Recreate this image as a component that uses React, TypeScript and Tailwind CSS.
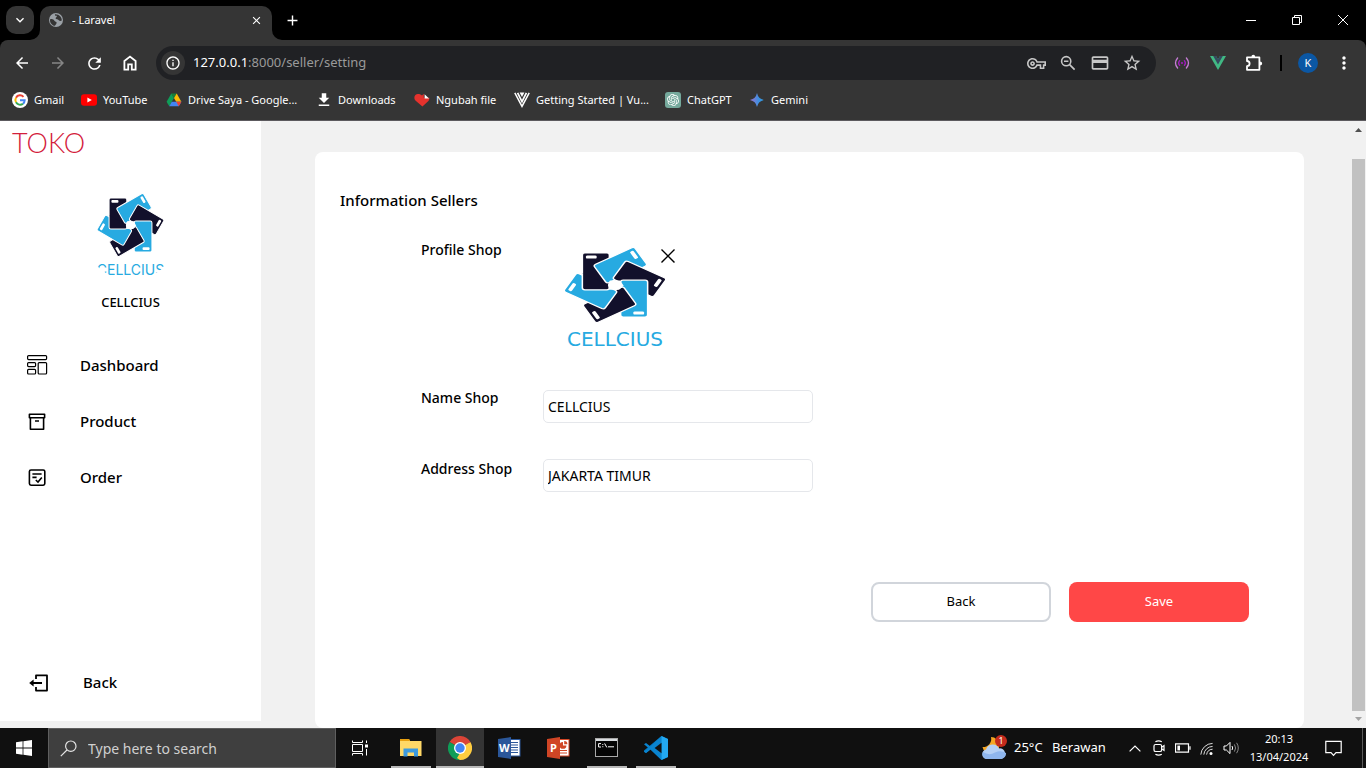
import React, { useState } from "react";
import {
  MdArrowBack,
  MdArrowForward,
  MdRefresh,
  MdInfoOutline,
  MdOutlineVpnKey,
  MdStarBorder,
  MdMoreVert,
  MdKeyboardArrowDown,
  MdClose,
  MdAdd,
  MdOutlineCreditCard,
  MdDownload,
} from "react-icons/md";
import { SiOpenai } from "react-icons/si";

/* ---------- Shop logo ---------- */

const NAVY = "#12102b";
const SKY = "#27aae1";

function Blade({ angle, fill }: { angle: number; fill: string }) {
  return (
    <g transform={`rotate(${angle})`}>
      <rect x="-64" y="-80" width="53" height="92" rx="5" fill={fill} stroke="#fff" strokeWidth="3" />
      <rect x="-57" y="-74" width="21" height="8" rx="3" fill="#fff" />
    </g>
  );
}

function Pinwheel({ id, className }: { id: string; className: string }) {
  return (
    <svg viewBox="-100 -95 200 190" preserveAspectRatio="none" className={className} aria-hidden="true">
      <defs>
        <clipPath id={id}>
          <path d="M-100 -50 L8 12 L8 95 L-100 95Z" />
        </clipPath>
      </defs>
      {[0, 60, 120, 180, 240, 300].map((angle, i) => (
        <Blade key={angle} angle={angle} fill={i % 2 ? SKY : NAVY} />
      ))}
      <g clipPath={`url(#${id})`}>
        <Blade angle={0} fill={NAVY} />
      </g>
      <path d="M-10 -11 L10 -11 L17 2 L8 12 L-11 12 L-14 0Z" fill="#fff" />
    </svg>
  );
}

/* ---------- Browser chrome ---------- */

function IconButton({ label, className = "", children }: { label: string; className?: string; children: React.ReactNode }) {
  return (
    <button aria-label={label} className={`flex h-7 w-7 shrink-0 items-center justify-center text-white ${className}`}>
      {children}
    </button>
  );
}

function TabStrip() {
  return (
    <div className="flex h-10 items-start bg-black">
      <button aria-label="Search tabs" className="mt-[6px] ml-[6px] flex h-7 w-7 items-center justify-center rounded-[10px] bg-[#353535] text-white">
        <MdKeyboardArrowDown size={16} />
      </button>
      <div className="relative mt-[6px] ml-[6px] flex h-[34px] w-[232px] items-center rounded-t-[10px] bg-[#353535] px-2 pb-[6px] text-white">
        <svg viewBox="0 0 10 10" className="absolute bottom-0 -left-[10px] h-[10px] w-[10px]" aria-hidden="true">
          <path d="M10 0V10H0A10 10 0 0 0 10 0Z" fill="#353535" />
        </svg>
        <svg viewBox="0 0 10 10" className="absolute -right-[10px] bottom-0 h-[10px] w-[10px]" aria-hidden="true">
          <path d="M0 0V10H10A10 10 0 0 1 0 0Z" fill="#353535" />
        </svg>
        <svg width="16" height="16" viewBox="0 0 16 16" aria-hidden="true">
          <circle cx="8" cy="8" r="7" fill="#9aa0a6" />
          <path d="M2 7.4C4.4 6.6 5.6 7.6 6.4 8.8C7.2 10 8.8 9.4 8.6 11C8.4 12.2 7.4 12.6 7 13.8C4 13.4 1.8 10.8 2 7.4ZM7 2.2C6.6 3.6 7.4 4 8.8 3.8C9.2 5.4 7.4 5.2 7.6 6.4C8 7.6 10 6.8 10.8 8.2C11.4 9.2 12.8 9.2 13.8 8.6C14 5 11 1.8 7 2.2Z" fill="#353535" />
        </svg>
        <span className="ml-2 flex-1 text-[11px]">- Laravel</span>
        <button aria-label="Close tab" className="flex h-4 w-4 items-center justify-center">
          <MdClose size={13} />
        </button>
      </div>
      <button aria-label="New tab" className="mt-[6px] ml-[6px] flex h-7 w-7 items-center justify-center text-white">
        <MdAdd size={17} />
      </button>
      <div className="ml-auto flex h-10 text-white">
        <button aria-label="Minimize" className="flex w-[46px] items-center justify-center">
          <svg width="10" height="10" viewBox="0 0 10 10"><path d="M0 5.5H10" stroke="currentColor" /></svg>
        </button>
        <button aria-label="Restore" className="flex w-[46px] items-center justify-center">
          <svg width="10" height="10" viewBox="0 0 10 10" fill="none" stroke="currentColor">
            <path d="M.5 2.5H7.5V9.5H.5ZM2.5 2.5V.5H9.5V7.5H7.5" />
          </svg>
        </button>
        <button aria-label="Close window" className="flex w-[46px] items-center justify-center">
          <svg width="10" height="10" viewBox="0 0 10 10"><path d="M0 0L10 10M10 0L0 10" stroke="currentColor" /></svg>
        </button>
      </div>
    </div>
  );
}

function Toolbar() {
  return (
    <div className="flex h-[46px] items-center gap-2 rounded-t-[8px] bg-[#353535] px-2">
      <IconButton label="Go back"><MdArrowBack size={18} /></IconButton>
      <IconButton label="Go forward" className="opacity-40"><MdArrowForward size={18} /></IconButton>
      <IconButton label="Reload"><MdRefresh size={19} /></IconButton>
      <IconButton label="Home">
        <svg width="16" height="16" viewBox="0 0 16 16" fill="none" stroke="currentColor" strokeWidth="1.8">
          <path d="M2.4 6L8 1.6L13.6 6V14.6H9.8V9.4H6.2V14.6H2.4Z" />
        </svg>
      </IconButton>
      <div className="ml-1 flex h-[34px] flex-1 items-center gap-3 rounded-full bg-[#202124] pr-[14px] pl-[5px] text-[#c7c7c7]">
        <button aria-label="View site information" className="flex h-6 w-6 items-center justify-center rounded-full bg-[#353535] text-white">
          <MdInfoOutline size={16} />
        </button>
        <div className="-ml-1 flex-1 text-[13px] text-[#9a9a9a]">
          <span className="text-white">127.0.0.1</span>:8000/seller/setting
        </div>
        <button aria-label="Passwords" className="flex w-5 justify-center"><MdOutlineVpnKey size={19} /></button>
        <button aria-label="Zoom" className="flex w-5 justify-center">
          <svg width="16" height="16" viewBox="0 0 16 16" fill="none" stroke="currentColor" strokeWidth="1.6">
            <circle cx="6.2" cy="6.2" r="4.6" />
            <path d="M9.6 9.6L14.6 14.6M4 6.2H8.4" />
          </svg>
        </button>
        <button aria-label="Payment methods" className="flex w-5 justify-center"><MdOutlineCreditCard size={20} /></button>
        <button aria-label="Bookmark this tab" className="flex w-5 justify-center"><MdStarBorder size={20} /></button>
      </div>
      <IconButton label="Network extension" className="ml-1">
        <svg width="16" height="16" viewBox="0 0 16 16" fill="none" strokeWidth="1.3" strokeLinecap="round">
          <path d="M3.6 3Q-.6 8 3.6 13M12.4 3Q16.6 8 12.4 13" stroke="#c77dd6" />
          <path d="M5.6 5.6Q3.6 8 5.6 10.4M10.4 5.6Q12.4 8 10.4 10.4" stroke="#a21cbf" />
          <circle cx="8" cy="8" r="1.1" fill="#a21cbf" />
        </svg>
      </IconButton>
      <IconButton label="Vue devtools">
        <svg width="16" height="14" viewBox="0 0 16 14">
          <path d="M0 0H6L8 3.4L10 0H16L8 14Z" fill="#41b883" />
          <path d="M3.2 0H6L8 3.4L10 0H12.8L8 8.4Z" fill="#35495e" />
        </svg>
      </IconButton>
      <IconButton label="Extensions">
        <svg width="18" height="18" viewBox="0 0 18 18" fill="none" stroke="currentColor" strokeWidth="1.8" strokeLinejoin="round">
          <path d="M2 3.4H14.4V15.8H2V12.2A2.6 2.6 0 0 0 2 7Z" />
          <path d="M6.4 3.2A1.9 2.4 0 0 1 10.2 3.2ZM14.8 7.6A2.4 1.9 0 0 1 14.8 11.4Z" fill="currentColor" stroke="none" />
        </svg>
      </IconButton>
      <div className="flex w-[10px] justify-center"><div className="h-4 w-[2px] bg-black" /></div>
      <IconButton label="Profile">
        <span className="flex h-5 w-5 items-center justify-center rounded-full bg-[#0b57a4] text-[11px]">K</span>
      </IconButton>
      <IconButton label="Menu"><MdMoreVert size={20} /></IconButton>
    </div>
  );
}

const bookmarks = [
  {
    label: "Gmail",
    width: "w-[69px]",
    icon: (
      <svg width="16" height="16" viewBox="0 0 48 48">
        <circle cx="24" cy="24" r="24" fill="#fff" />
        <g fill="none" strokeWidth="6">
          <path d="M34.5 14.5A14 14 0 0 0 12 17" stroke="#ea4335" />
          <path d="M12 17A14 14 0 0 0 12 31" stroke="#fbbc05" />
          <path d="M12 31A14 14 0 0 0 33 35" stroke="#34a853" />
          <path d="M33 35A14 14 0 0 0 38 24.5H24" stroke="#4285f4" />
        </g>
      </svg>
    ),
  },
  {
    label: "YouTube",
    width: "w-[85px]",
    icon: (
      <svg width="16" height="16" viewBox="0 0 16 16">
        <rect y="2.3" width="16" height="11.4" rx="3" fill="#f00" />
        <path d="M6.4 5.6L10.8 8L6.4 10.4Z" fill="#fff" />
      </svg>
    ),
  },
  {
    label: "Drive Saya - Google...",
    width: "w-[150px]",
    icon: (
      <svg width="16" height="16" viewBox="0 0 16 16">
        <path d="M5.3 1.4L8 6L3.2 14.2L.6 9.7Z" fill="#0f9d58" />
        <path d="M5.3 1.4H10.7L8 6Z" fill="#188038" />
        <path d="M10.7 1.4L15.4 9.7H10.2L8 6Z" fill="#fbbc04" />
        <path d="M5.8 9.7H15.4L12.8 14.2H3.2Z" fill="#4285f4" />
        <path d="M15.4 9.7L12.8 14.2L10.2 9.7Z" fill="#ea4335" />
      </svg>
    ),
  },
  { label: "Downloads", width: "w-[98px]", icon: <MdDownload size={18} className="-mx-px shrink-0" /> },
  {
    label: "Ngubah file",
    width: "w-[100px]",
    icon: (
      <svg width="16" height="16" viewBox="0 0 16 16">
        <path d="M8.4 14.6L1.4 8.6C-1 5.6 1 2 4 2C5.8 2 7.3 2.6 8 3.6L9.8 1.8V5.8H15.4C15.4 7 15.2 8 14.4 9Z" fill="#e5322d" />
        <path d="M10.6 2.2L15 6.4H10.6Z" fill="#fff" />
      </svg>
    ),
  },
  {
    label: "Getting Started | Vu...",
    width: "w-[151px]",
    icon: (
      <svg width="16" height="16" viewBox="0 0 16 16" fill="none" stroke="#fff">
        <path d="M.8 .8L8 14.4L15.2 .8" strokeWidth="1.5" />
        <path d="M3.6 .8L8 9.6L12.4 .8" strokeWidth="1.7" />
        <path d="M5.6 .4H10.4L8 5Z" fill="#fff" stroke="none" />
      </svg>
    ),
  },
  {
    label: "ChatGPT",
    width: "w-[84px]",
    icon: (
      <span className="flex h-4 w-4 items-center justify-center rounded-[3px] bg-[#75a99c] text-white">
        <SiOpenai size={12} />
      </span>
    ),
  },
  {
    label: "Gemini",
    width: "w-[69px]",
    icon: (
      <svg width="16" height="16" viewBox="0 0 16 16">
        <defs>
          <linearGradient id="gem" x1="0" x2="1">
            <stop offset="0.1" stopColor="#8e75d0" />
            <stop offset="0.6" stopColor="#3f8fe0" />
            <stop offset="1" stopColor="#2f9de0" />
          </linearGradient>
        </defs>
        <path d="M8 1Q9.2 6.8 15 8Q9.2 9.2 8 15Q6.8 9.2 1 8Q6.8 6.8 8 1Z" fill="url(#gem)" />
      </svg>
    ),
  },
];

function BookmarkBar() {
  return (
    <nav className="flex h-[35px] items-start border-b border-[#5c5a5e] bg-[#353535] pt-[6px] pl-3 text-[11px] text-white">
      {bookmarks.map((b) => (
        <a key={b.label} href="#" className={`flex h-4 items-center gap-[6px] whitespace-nowrap ${b.width}`}>
          <span className="flex w-4 shrink-0 justify-center">{b.icon}</span>
          {b.label}
        </a>
      ))}
    </nav>
  );
}

/* ---------- Page ---------- */

const menu = [
  {
    label: "Dashboard",
    icon: (
      <svg width="22" height="22" viewBox="0 0 22 22" fill="none" stroke="#000" strokeWidth="1.2">
        <rect x="1.6" y="1.6" width="19" height="4" rx="1" />
        <rect x="1.6" y="8.6" width="8" height="4" rx="1" />
        <rect x="1.6" y="15.4" width="8" height="4.6" rx="1" />
        <rect x="12.2" y="8.6" width="8.4" height="11.4" rx="1" />
      </svg>
    ),
  },
  {
    label: "Product",
    icon: (
      <svg width="22" height="22" viewBox="0 0 22 22" fill="none" stroke="#000" strokeWidth="1.6">
        <path d="M3.4 4.2H18.6V7.8H3.4ZM4.4 7.8V19.2H17.6V7.8M9 11H13" strokeLinejoin="round" />
      </svg>
    ),
  },
  {
    label: "Order",
    icon: (
      <svg width="22" height="22" viewBox="0 0 22 22" fill="none" stroke="#000" strokeWidth="1.6">
        <rect x="3.4" y="4" width="15.4" height="15.2" rx="1.6" />
        <path d="M6.4 8H15.6M6.4 11.4H10.6M9.8 14L12 16L15.8 11.6" />
      </svg>
    ),
  },
];

function Sidebar() {
  return (
    <aside className="mb-[7px] flex w-[261px] shrink-0 flex-col bg-white">
      <a href="#" className="mt-1 ml-3 font-['Lato',sans-serif] text-[27px] leading-9 font-light text-[#d3203c]">TOKO</a>
      <div className="mt-[23px] flex flex-col items-center">
        <div className="flex h-24 w-24 flex-col items-center overflow-hidden rounded-full bg-white pt-[9px]">
          <Pinwheel id="side-logo" className="h-16 w-[67px]" />
          <span className="mt-[5px] font-['Inter',sans-serif] text-[14px] leading-4 text-[#27aae1]">CELLCIUS</span>
        </div>
        <p className="mt-3 text-[13px] leading-5 font-medium">CELLCIUS</p>
      </div>
      <nav className="mt-[25px] text-[15px] font-medium">
        {menu.map((m) => (
          <a key={m.label} href="#" className="flex h-14 items-center pl-[26px]">
            {m.icon}
            <span className="ml-8">{m.label}</span>
          </a>
        ))}
      </nav>
      <a href="#" className="mt-auto mb-[11px] flex h-14 items-center pl-7 text-[15px] font-medium">
        <svg width="22" height="22" viewBox="0 0 22 22" fill="none" stroke="#000" strokeWidth="1.8">
          <path d="M8 8V4.4H19V19.6H8V16M14 12H4" strokeLinejoin="round" />
          <path d="M5.6 8.6V15.4L1.2 12Z" fill="#000" stroke="none" />
        </svg>
        <span className="ml-[33px]">Back</span>
      </a>
    </aside>
  );
}

function SellerForm() {
  const [name, setName] = useState("CELLCIUS");
  const [address, setAddress] = useState("JAKARTA TIMUR");
  const labelClass = "w-[122px] shrink-0 text-[14px] leading-5 font-medium";
  const inputClass = "h-[33px] w-[270px] rounded-[5px] border border-[#e5e7eb] bg-white px-1 text-[14px] text-black outline-none";
  return (
    <form className="flex-1 rounded-lg bg-white px-[25px] pt-9 text-black" onSubmit={(e) => e.preventDefault()}>
      <h1 className="text-[15px] leading-6 font-medium">Information Sellers</h1>
      <div className="mt-7 pl-[81px]">
        <div className="flex h-[148px] items-start">
          <span className={labelClass}>Profile Shop</span>
          <div className="relative ml-[21px] flex w-[102px] flex-col items-center pt-[7px]">
            <Pinwheel id="form-logo" className="h-[76px] w-[102px]" />
            <span className="mt-[6px] font-['DejaVu_Sans',sans-serif] text-[20px] leading-5 text-[#27aae1]">CELLCIUS</span>
            <button type="button" aria-label="Remove picture" className="absolute top-2 -right-[10px] h-4 w-4">
              <svg width="16" height="16" viewBox="0 0 16 16"><path d="M1.5 1.5L14.5 14.5M14.5 1.5L1.5 14.5" stroke="#000" strokeWidth="1.4" /></svg>
            </button>
          </div>
        </div>
        <div className="flex h-[71px] items-start">
          <label htmlFor="shop-name" className={labelClass}>Name Shop</label>
          <input id="shop-name" className={`mt-[2px] ${inputClass}`} value={name} onChange={(e) => setName(e.target.value)} />
        </div>
        <div className="flex items-start">
          <label htmlFor="shop-address" className={labelClass}>Address Shop</label>
          <input id="shop-address" className={inputClass} value={address} onChange={(e) => setAddress(e.target.value)} />
        </div>
      </div>
      <div className="mt-[90px] mr-[30px] flex justify-end gap-[18px] text-[13px]">
        <button type="button" className="h-10 w-[180px] rounded-lg border-2 border-[#d1d5db]">Back</button>
        <button type="submit" className="h-10 w-[180px] rounded-lg bg-[#ff4747] text-white">Save</button>
      </div>
    </form>
  );
}

function Scrollbar() {
  return (
    <div className="flex w-4 shrink-0 flex-col items-center bg-[#f1f1f1] py-[6px]" aria-hidden="true">
      <svg width="7" height="4" viewBox="0 0 7 4" className="mt-px"><path d="M0 4L3.5 0L7 4Z" fill="#505050" /></svg>
      <div className="mt-[27px] mb-[6px] w-[13px] flex-1 bg-[#c1c1c1]" />
      <svg width="7" height="4" viewBox="0 0 7 4" className="mb-px"><path d="M0 0L3.5 4L7 0Z" fill="#a3a3a3" /></svg>
    </div>
  );
}

/* ---------- Taskbar ---------- */

function OfficeIcon({ letter, color, dark }: { letter: string; color: string; dark: string }) {
  return (
    <svg width="24" height="24" viewBox="0 0 24 24">
      <rect x="12" y="3.5" width="11" height="16.5" fill="#fff" stroke={color} />
      {letter === "W" ? (
        <path d="M14 6.5H21M14 9H21M14 11.5H21M14 14H21M14 16.5H21" stroke={color} strokeWidth="1.2" />
      ) : (
        <>
          <path d="M17 6A3.4 3.4 0 1 0 20.4 9.4H17Z" fill={color} />
          <path d="M18.2 5V8.2H21.4A3.2 3.2 0 0 0 18.2 5Z" fill={color} />
          <path d="M14 14.5H21M14 17H21" stroke={color} strokeWidth="1.2" />
        </>
      )}
      <path d="M1 3L14 1V23L1 21Z" fill={dark} />
      <text x="7.4" y="16" textAnchor="middle" fontSize="11" fontWeight="700" fill="#fff" className="font-['Open_Sans',sans-serif]">{letter}</text>
    </svg>
  );
}

const apps = [
  {
    label: "File Explorer",
    running: true,
    icon: (
      <svg width="22" height="22" viewBox="0 0 22 22">
        <path d="M0 2H9L10 4H21.5V19H0Z" fill="#ffd867" />
        <path d="M0 2H9L10 4H0Z" fill="#e8a010" />
        <path d="M3.5 11.5H18V19.5H14V15.5H7.5V19.5H3.5Z" fill="#3d9ade" />
      </svg>
    ),
  },
  {
    label: "Google Chrome",
    running: true,
    active: true,
    icon: (
      <svg width="24" height="24" viewBox="0 0 24 24">
        <path d="M12 12L1.6 6A12 12 0 0 1 22.4 6Z" fill="#db4437" />
        <path d="M12 12L22.4 6A12 12 0 0 1 12 24Z" fill="#ffcd40" />
        <path d="M12 12L12 24A12 12 0 0 1 1.6 6Z" fill="#0f9d58" />
        <path d="M12 6.5H22.6L22.4 6L12 5Z" fill="#db4437" />
        <path d="M16.8 14.8L12 24L9 22L12 17Z" fill="#ffcd40" />
        <circle cx="12" cy="12" r="6" fill="#fff" />
        <circle cx="12" cy="12" r="4.7" fill="#4285f4" />
      </svg>
    ),
  },
  { label: "Word", icon: <OfficeIcon letter="W" color="#2b579a" dark="#2b579a" /> },
  { label: "PowerPoint", icon: <OfficeIcon letter="P" color="#d24726" dark="#d04525" /> },
  {
    label: "Command Prompt",
    running: true,
    icon: (
      <svg width="24" height="20" viewBox="0 0 24 20">
        <rect x=".5" y=".5" width="22" height="18" fill="#050505" stroke="#a9a9a9" />
        <rect x="1" y="1" width="21" height="2" fill="#d9dde0" />
        <path d="M6 5.6H3.6V9H6M7.8 6V7M7.8 8.2V9.2M9.6 5.4L11.8 9.4M13 8.8H19" stroke="#fff" fill="none" strokeWidth="1" />
      </svg>
    ),
  },
  {
    label: "Visual Studio Code",
    running: true,
    icon: (
      <svg width="24" height="24" viewBox="0 0 24 24">
        <path d="M17.5 0L24 3V21L17.5 24L6.5 13.6L2 17L0 15.8V14.6L17.5 0Z" fill="#0078c4" />
        <path d="M17.5 0V24L6.5 13.6L2 17L0 15.8L4.4 12L0 8.2L2 7L6.5 10.4Z" fill="#0a84cf" />
        <path d="M17.5 0L24 3V21L17.5 24Z" fill="#23a9f2" />
        <path d="M17.5 6.8V17.2L10.6 12Z" fill="#111" />
      </svg>
    ),
  },
];

function Taskbar() {
  return (
    <footer className="flex h-10 shrink-0 items-stretch bg-[#101010] text-white">
      <button aria-label="Start" className="flex w-12 items-center justify-center">
        <svg width="16" height="16" viewBox="0 0 16 16" fill="#fff">
          <path d="M0 2.2L6.6 1.3V7.6H0ZM7.4 1.2L16 0V7.6H7.4ZM0 8.4H6.6V14.7L0 13.8ZM7.4 8.4H16V16L7.4 14.8Z" />
        </svg>
      </button>
      <label className="flex w-[288px] items-center border border-[#5f5f5f] bg-[#3f3f3f] pl-[11px]">
        <svg width="17" height="17" viewBox="0 0 17 17" className="shrink-0" fill="none" stroke="#e4e4e4" strokeWidth="1.2">
          <circle cx="10.8" cy="6.2" r="5.2" />
          <path d="M7 10L.8 16.2" />
        </svg>
        <input aria-label="Search" placeholder="Type here to search" className="ml-[11px] w-full min-w-0 bg-transparent text-[14px] text-white outline-none placeholder:text-[#d0d0d0]" />
      </label>
      <button aria-label="Task View" className="mr-[3px] flex w-12 items-center justify-center">
        <svg width="18" height="16" viewBox="0 0 18 16" fill="none" stroke="#fff">
          <path d="M1.5 4.5H11.5V11.5H1.5ZM1.5 .5V2.5H11.5V.5M1.5 15.5V13.5H11.5V15.5M15.5 .5V3M15.5 9V15.5" />
          <rect x="14.5" y="5" width="2" height="2" fill="#fff" />
        </svg>
      </button>
      <div className="flex gap-px">
        {apps.map((a) => (
          <button key={a.label} aria-label={a.label} className={`flex w-12 flex-col items-center ${a.active ? "bg-[#343434]" : ""}`}>
            <span className="flex flex-1 items-center pt-[2px]">{a.icon}</span>
            <span className={`h-[2px] ${a.active ? "w-12" : "w-10"} ${a.running ? "bg-[#b9b9b9]" : "bg-transparent"}`} />
          </button>
        ))}
      </div>
      <div className="ml-auto flex items-center pr-[3px]">
        <button className="flex items-center text-[13px] whitespace-nowrap">
          <span className="relative mr-[7px]">
            <svg width="26" height="24" viewBox="0 0 26 24" className="block">
              <path d="M10 1A8.5 8.5 0 1 1 1.5 11A8 8 0 0 0 10 1Z" fill="#f5a623" />
              <path d="M5.4 23A4.8 4.8 0 0 1 5 13.6A7 7 0 0 1 18 12.4A5.4 5.4 0 0 1 20 23Z" fill="#b5d0f5" />
              <path d="M5.4 23A4.8 4.8 0 0 1 2 16Q8 20 14 16.5Q20 14 25 17A5.4 5.4 0 0 1 20 23Z" fill="#8fb6ee" />
            </svg>
            <span className="absolute -top-px right-0 flex h-3 w-3 items-center justify-center rounded-full bg-[#c42b1c] text-[9px]">1</span>
          </span>
          <span className="w-[38px] text-left">25°C</span>
          <span className="w-[71px] text-left">Berawan</span>
        </button>
        <button aria-label="Show hidden icons" className="flex w-6 justify-center">
          <svg width="12" height="7" viewBox="0 0 12 7" fill="none" stroke="#fff" strokeWidth="1.2"><path d="M.6 6.4L6 1L11.4 6.4" /></svg>
        </button>
        <button aria-label="Meet Now" className="flex w-6 justify-center">
          <svg width="12" height="16" viewBox="0 0 12 16" fill="none" stroke="#fff" strokeWidth="1.2"><rect x="1" y="4.5" width="7.6" height="7" rx="1.6" /><path d="M8.6 7.2L11 5.6V10.4L8.6 8.8M2.4 1.8Q5.6 0 8.8 1.8M2.4 14.2Q5.6 16 8.8 14.2" /></svg>
        </button>
        <button aria-label="Battery" className="flex w-6 justify-center">
          <svg width="16" height="10" viewBox="0 0 16 10" fill="none" stroke="#fff" strokeWidth="1.2"><path d="M.5 .9H13.5V9.1H.5ZM15 3.2V6.8" /><path d="M2.4 2.6H5V7.4H2.4Z" fill="#fff" stroke="none" /></svg>
        </button>
        <button aria-label="Wi-Fi" className="flex w-6 justify-center">
          <svg width="14" height="13" viewBox="0 0 14 13" fill="none" stroke="#fff"><path d="M.8 12.6A12 12 0 0 1 12.6 1.4M3.8 12.6A9 9 0 0 1 12.6 4.4M6.6 12.6A6.4 6.4 0 0 1 12.6 7.2" opacity=".85" /><circle cx="11" cy="11.4" r="1.5" fill="#fff" stroke="none" /></svg>
        </button>
        <button aria-label="Volume" className="flex w-6 justify-center">
          <svg width="17" height="14" viewBox="0 0 17 14" fill="none" stroke="#fff"><path d="M1 5H3.4L7 1.4V12.6L3.4 9H1Z" /><path d="M9 5Q10.4 7 9 9" /><path d="M11.4 3.4Q13.8 7 11.4 10.6M13.6 1.8Q17 7 13.6 12.2" opacity=".5" /></svg>
        </button>
        <button className="w-[72px] text-center text-[11px] leading-[18px]">
          <span className="block">20:13</span>
          <span className="block">13/04/2024</span>
        </button>
        <button aria-label="Notifications" className="flex w-9 justify-center">
          <svg width="17" height="17" viewBox="0 0 17 17" fill="none" stroke="#fff" strokeWidth="1.2"><path d="M.8 1.4H16.2V12.6H11L8.5 15.4L6 12.6H.8Z" /></svg>
        </button>
        <div className="ml-[11px] h-10 w-px bg-[#5a5a5a]" />
      </div>
    </footer>
  );
}

export default function App() {
  return (
    <div className="flex min-h-screen flex-col bg-[#f1f1f1] font-['Noto_Sans','Open_Sans',sans-serif] text-black">
      <header className="bg-black">
        <TabStrip />
        <Toolbar />
        <BookmarkBar />
      </header>
      <div className="flex flex-1">
        <Sidebar />
        <main className="flex flex-1 pt-[31px] pr-[46px] pl-[54px]">
          <SellerForm />
        </main>
        <Scrollbar />
      </div>
      <Taskbar />
    </div>
  );
}
